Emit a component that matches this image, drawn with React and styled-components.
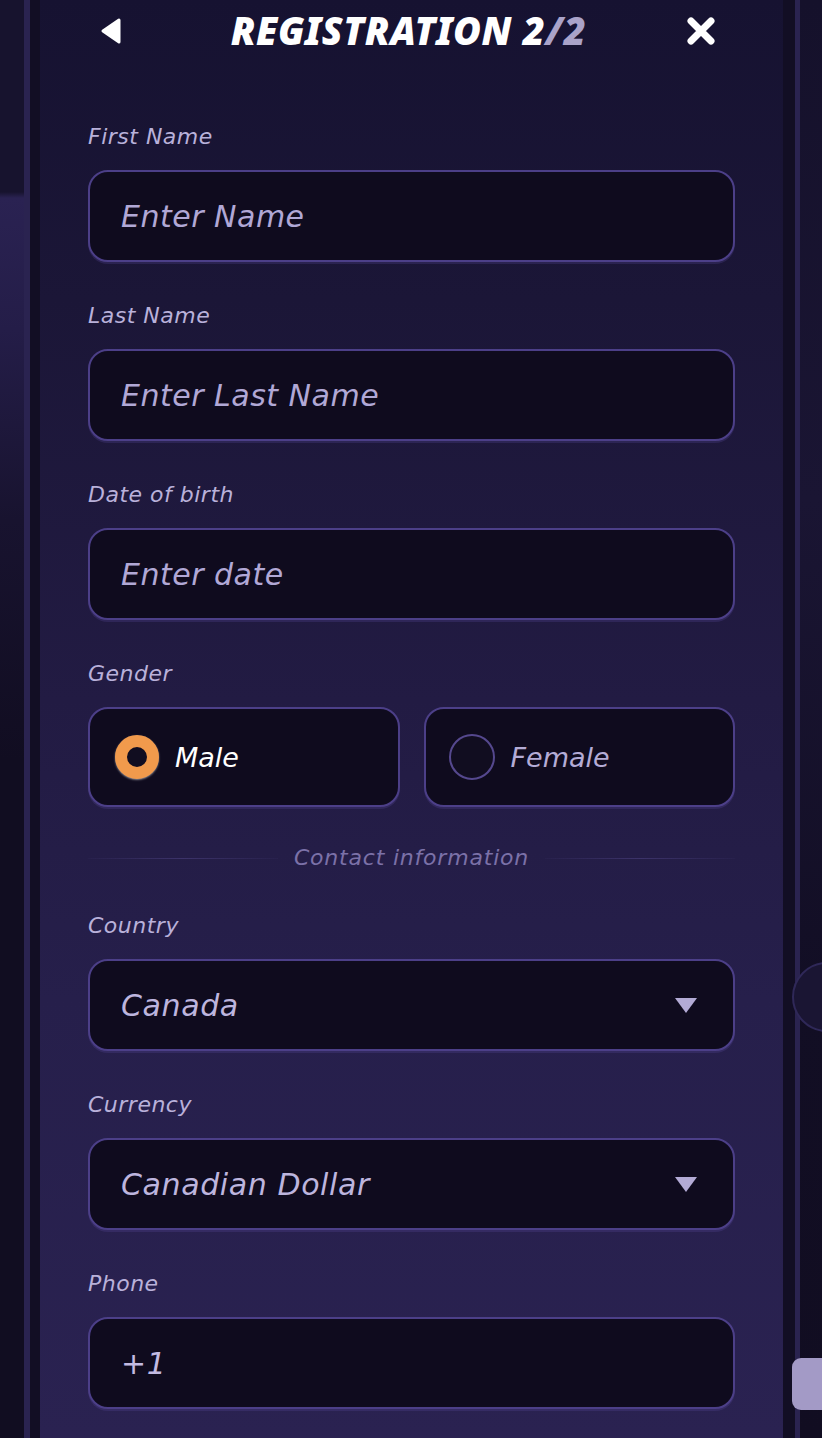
import React, { useState } from 'react';
import styled, { createGlobalStyle } from 'styled-components';

const GlobalStyle = createGlobalStyle`
  html, body {
    margin: 0;
    padding: 0;
    background: #120e22;
  }
  * {
    box-sizing: border-box;
  }
`;

const FONT = `'DejaVu Sans', 'Noto Sans', sans-serif`;
const TITLE_FONT = `'Noto Sans', 'Open Sans', sans-serif`;

const Page = styled.div`
  position: relative;
  width: 822px;
  height: 1438px;
  overflow: hidden;
  display: flex;
  background:
    linear-gradient(
        180deg,
        #17132e 0,
        #17132e 192px,
        #2a2252 198px,
        #241d48 330px,
        #18132f 520px,
        #110d21 760px,
        #110d21 100%
      )
      left top / 24px 100% no-repeat,
    linear-gradient(180deg, #15112b 0, #1a1533 500px, #120e24 1000px, #110d21 100%);
  font-family: ${FONT};
`;

const Frame = styled.div`
  margin-left: 24px;
  width: 776px;
  height: 100%;
  display: flex;
  border-left: 6px solid #2a2350;
  border-right: 5px solid #2a2350;
`;

const Panel = styled.div`
  flex: 1;
  display: flex;
  flex-direction: column;
  border-left: 10px solid #120e24;
  border-right: 12px solid #120e24;
  background: linear-gradient(
    180deg,
    #161231 0,
    #1b1637 300px,
    #221b43 700px,
    #261f4b 1000px,
    #2a2251 100%
  );
`;

const Header = styled.div`
  flex-shrink: 0;
  height: 62px;
  display: grid;
  grid-template-columns: 1fr auto 1fr;
  align-items: center;
  padding: 0 66px 0 60px;
`;

const IconButton = styled.button`
  background: none;
  border: none;
  padding: 0;
  display: flex;
  cursor: pointer;
  justify-self: ${(p) => (p.$end ? 'end' : 'start')};
`;

const Title = styled.h1`
  margin: 0;
  font-family: ${TITLE_FONT};
  font-style: italic;
  font-weight: 900;
  font-size: 38px;
  letter-spacing: 0.6px;
  color: #ffffff;
  line-height: 1.3;
  white-space: nowrap;

  span {
    color: #aaa3c9;
  }
`;

const Form = styled.form`
  flex-shrink: 0;
  display: flex;
  flex-direction: column;
  padding: 63px 48px 0 48px;
`;

const Field = styled.div`
  display: flex;
  flex-direction: column;
  margin-bottom: 42px;
`;

const Label = styled.label`
  font-style: oblique;
  font-size: 22px;
  letter-spacing: 0.5px;
  line-height: 24px;
  color: #b9b1da;
  margin-bottom: 21px;
`;

const boxStyle = `
  height: 92px;
  border-radius: 20px;
  border: 2px solid #4c3f88;
  background: #0f0b1e;
  box-shadow: 0 2px 0 rgba(90, 75, 160, 0.25);
`;

const Input = styled.input`
  ${boxStyle}
  width: 100%;
  padding: 0 31px;
  font-family: ${FONT};
  font-style: oblique;
  font-size: 30px;
  letter-spacing: 0.5px;
  color: #c2bae2;
  outline: none;

  &::placeholder {
    color: #b1a8d6;
  }
`;

const Select = styled.div`
  ${boxStyle}
  display: flex;
  align-items: center;
  justify-content: space-between;
  padding: 0 36px 0 31px;
  font-style: oblique;
  font-size: 30px;
  letter-spacing: 0.6px;
  color: #bdb5de;
  cursor: pointer;
`;

const Caret = styled.span`
  width: 0;
  height: 0;
  border-left: 11px solid transparent;
  border-right: 11px solid transparent;
  border-top: 15px solid #b3abd6;
`;

const GenderRow = styled.div`
  display: grid;
  grid-template-columns: 1fr 1fr;
  gap: 24px;
`;

const GenderOption = styled.button`
  ${boxStyle}
  height: 100px;
  display: flex;
  align-items: center;
  gap: 16px;
  padding: 0 0 0 ${(p) => (p.$active ? 25 : 23)}px;
  font-family: ${FONT};
  font-style: oblique;
  font-size: 27px;
  color: ${(p) => (p.$active ? '#ffffff' : '#b4acd6')};
  cursor: pointer;
`;

const Radio = styled.span`
  width: ${(p) => (p.$active ? 44 : 46)}px;
  height: ${(p) => (p.$active ? 44 : 46)}px;
  border-radius: 50%;
  flex-shrink: 0;
  background: #110d20;
  border: ${(p) => (p.$active ? '12px solid #f19a4c' : '2px solid #55488e')};
  box-shadow: ${(p) => (p.$active ? '0 1px 2px rgba(255,255,255,0.5)' : 'none')};
`;

const Divider = styled.div`
  display: flex;
  align-items: center;
  gap: 16px;
  margin: -4px 0 43px;
  font-style: oblique;
  font-size: 22px;
  letter-spacing: 0.8px;
  line-height: 26px;
  color: #7b71a8;
  white-space: nowrap;

  &::before,
  &::after {
    content: '';
    flex: 1;
    height: 1px;
    background: linear-gradient(90deg, rgba(70, 60, 120, 0.1), rgba(70, 60, 120, 0.7), rgba(70, 60, 120, 0.1));
  }
`;

const SideTab = styled.div`
  position: absolute;
  right: -10px;
  top: 1358px;
  width: 40px;
  height: 52px;
  border-radius: 9px;
  background: #a39ac6;
`;

const SideCircle = styled.div`
  position: absolute;
  right: -40px;
  top: 962px;
  width: 70px;
  height: 70px;
  border-radius: 50%;
  border: 2px solid #2f2858;
  background: #1a1533;
`;

function BackIcon() {
  return (
    <svg width="22" height="26" viewBox="0 0 22 26">
      <polygon points="19,2 19,24 3,13" fill="#ffffff" stroke="#ffffff" strokeWidth="3" strokeLinejoin="round" />
    </svg>
  );
}

function CloseIcon() {
  return (
    <svg width="32" height="30" viewBox="0 0 32 30">
      <path d="M6 5 L26 25 M26 5 L6 25" stroke="#ffffff" strokeWidth="7" strokeLinecap="round" />
    </svg>
  );
}

const textFields = [
  { id: 'first', label: 'First Name', placeholder: 'Enter Name' },
  { id: 'last', label: 'Last Name', placeholder: 'Enter Last Name' },
  { id: 'dob', label: 'Date of birth', placeholder: 'Enter date' },
];

function App() {
  const [gender, setGender] = useState('male');

  return (
    <>
      <GlobalStyle />
      <Page>
        <Frame>
          <Panel>
            <Header>
              <IconButton aria-label="Back"><BackIcon /></IconButton>
              <Title>REGISTRATION 2<span>/2</span></Title>
              <IconButton $end aria-label="Close"><CloseIcon /></IconButton>
            </Header>
            <Form onSubmit={(e) => e.preventDefault()}>
              {textFields.map((f) => (
                <Field key={f.id}>
                  <Label htmlFor={f.id}>{f.label}</Label>
                  <Input id={f.id} placeholder={f.placeholder} />
                </Field>
              ))}
              <Field>
                <Label>Gender</Label>
                <GenderRow>
                  <GenderOption type="button" $active={gender === 'male'} onClick={() => setGender('male')}>
                    <Radio $active={gender === 'male'} />
                    Male
                  </GenderOption>
                  <GenderOption type="button" $active={gender === 'female'} onClick={() => setGender('female')}>
                    <Radio $active={gender === 'female'} />
                    Female
                  </GenderOption>
                </GenderRow>
              </Field>
              <Divider>Contact information</Divider>
              <Field>
                <Label>Country</Label>
                <Select>
                  Canada
                  <Caret />
                </Select>
              </Field>
              <Field>
                <Label>Currency</Label>
                <Select>
                  Canadian Dollar
                  <Caret />
                </Select>
              </Field>
              <Field>
                <Label htmlFor="phone">Phone</Label>
                <Input id="phone" defaultValue="+1" />
              </Field>
            </Form>
          </Panel>
        </Frame>
        <SideCircle />
        <SideTab />
      </Page>
    </>
  );
}

export default App;
